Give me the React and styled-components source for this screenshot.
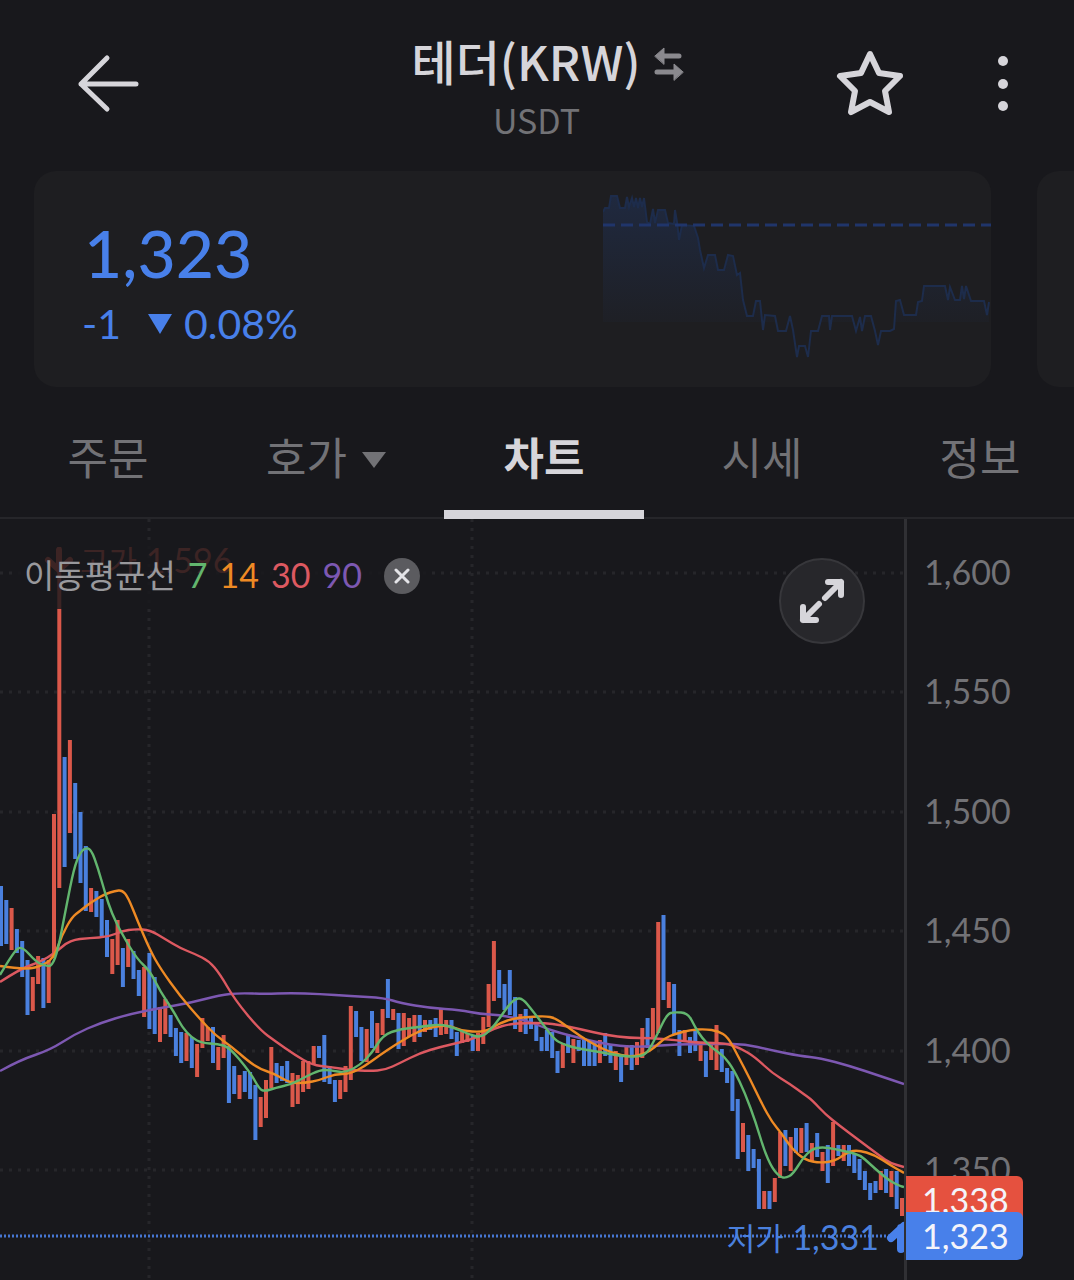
import React from 'react';
import styled, { createGlobalStyle } from 'styled-components';

const colors = {
  background: '#18181c',
  card: '#1e1e21',
  text: '#d6d5da',
  muted: '#727276',
  line: '#26262a',
  blue: '#4880ea',
  candleBlue: '#4a80de',
  candleRed: '#db584a',
  tagRed: '#e5513f',
};

const averages = [
  {
    days: 7,
    color: '#62b56e',
    points: [0, 975, 14, 951, 22, 946, 36, 962, 46, 966, 52, 966, 58, 950, 66, 908, 74, 868, 80, 853, 85, 848, 91, 849, 98, 868, 105, 893, 112, 914, 122, 934, 137, 959, 150, 971, 160, 991, 174, 1012, 182, 1027, 192, 1038, 202, 1043, 218, 1044, 229, 1047, 250, 1072, 260, 1090, 266, 1091, 275, 1088, 292, 1084, 305, 1077, 320, 1070, 330, 1070, 345, 1073, 360, 1065, 372, 1053, 383, 1035, 400, 1029, 420, 1027, 440, 1024, 455, 1028, 468, 1034, 482, 1038, 495, 1025, 508, 1006, 516, 998, 523, 999, 532, 1010, 545, 1027, 555, 1040, 563, 1044, 575, 1048, 600, 1052, 620, 1056, 640, 1057, 648, 1052, 656, 1037, 667, 1014, 674, 1012, 688, 1013, 695, 1027, 702, 1038, 712, 1048, 724, 1056, 734, 1070, 745, 1093, 756, 1123, 764, 1150, 772, 1168, 780, 1177, 786, 1178, 793, 1174, 803, 1158, 812, 1149, 822, 1147, 835, 1149, 848, 1152, 860, 1155, 870, 1164, 880, 1173, 890, 1181, 900, 1186, 904, 1187],
  },
  {
    days: 14,
    color: '#ee8a24',
    points: [0, 966, 25, 970, 45, 965, 55, 955, 62, 935, 72, 917, 80, 911, 90, 903, 105, 894, 115, 891, 122, 890, 128, 897, 138, 922, 150, 950, 160, 968, 180, 996, 200, 1019, 215, 1035, 232, 1047, 248, 1061, 260, 1069, 275, 1074, 290, 1083, 305, 1083, 320, 1080, 335, 1074, 350, 1074, 365, 1066, 380, 1055, 395, 1045, 410, 1036, 420, 1031, 432, 1027, 448, 1025, 460, 1030, 475, 1032, 487, 1031, 500, 1023, 515, 1018, 530, 1017, 545, 1016, 555, 1018, 565, 1025, 580, 1036, 595, 1045, 612, 1053, 630, 1057, 645, 1054, 655, 1047, 665, 1038, 675, 1034, 690, 1030, 705, 1029, 718, 1031, 728, 1037, 738, 1056, 750, 1079, 762, 1104, 772, 1122, 782, 1134, 792, 1149, 805, 1160, 820, 1163, 835, 1161, 848, 1152, 858, 1150, 875, 1155, 890, 1165, 904, 1173],
  },
  {
    days: 30,
    color: '#dd5961',
    points: [0, 982, 20, 969, 40, 962, 55, 953, 70, 940, 90, 938, 108, 937, 122, 931, 135, 929, 150, 930, 165, 939, 180, 948, 195, 954, 209, 961, 220, 974, 235, 1000, 260, 1030, 275, 1041, 295, 1055, 312, 1065, 330, 1067, 350, 1070, 370, 1071, 385, 1070, 400, 1063, 420, 1053, 440, 1047, 462, 1042, 478, 1037, 495, 1028, 510, 1024, 525, 1023, 545, 1023, 560, 1025, 580, 1029, 605, 1035, 630, 1038, 650, 1038, 675, 1040, 700, 1043, 725, 1043, 740, 1048, 755, 1057, 772, 1073, 790, 1084, 805, 1095, 812, 1100, 825, 1114, 840, 1126, 860, 1141, 880, 1156, 890, 1163, 904, 1167],
  },
  {
    days: 90,
    color: '#7d58b2',
    points: [0, 1071, 20, 1060, 50, 1050, 75, 1034, 100, 1023, 130, 1014, 160, 1008, 190, 1003, 220, 995, 240, 993, 265, 994, 290, 993, 320, 994, 350, 996, 385, 998, 400, 1003, 430, 1008, 460, 1010, 480, 1014, 500, 1015, 525, 1020, 545, 1028, 560, 1033, 580, 1038, 600, 1043, 620, 1046, 640, 1047, 665, 1045, 690, 1044, 720, 1044, 745, 1044, 770, 1050, 800, 1056, 820, 1058, 850, 1066, 880, 1076, 904, 1084],
  },
];

// one entry per candle: direction (b = down, r = up), top, bottom
const candles = `
b886-946 b900-944 r908-950 b929-953 b941-977 b960-1015 r977-1011 r956-984 b958-1008 r960-1003
r814-958 r547-888 b757-867 r740-833 b783-859 b812-883 b846-911 r888-912 b891-917 b899-936
b920-957 r939-974 r920-965 b948-987 r939-967 b951-979 b970-996 r967-1017 b953-1029 b977-1034
r1007-1042 r999-1034 b1015-1037 b1028-1056 b1032-1063 r1033-1061 b1037-1068 r1044-1077 r1018-1048 r1027-1041
b1027-1063 r1047-1070 r1035-1058 b1046-1103 b1066-1094 r1075-1099 b1071-1092 b1072-1099 b1085-1140 r1097-1127
r1080-1118 r1047-1088 b1063-1083 b1066-1081 b1061-1083 r1073-1107 r1075-1104 r1061-1092 r1061-1089 r1046-1064
b1046-1058 b1035-1082 b1066-1084 b1080-1102 r1080-1099 r1066-1092 r1006-1080 b1011-1037 b1027-1061 r1029-1062
b1011-1048 r1023-1053 r1009-1035 b979-1018 r1009-1020 b1013-1049 r1013-1046 r1018-1037 r1015-1042 b1015-1037
r1020-1032 b1020-1030 b1018-1037 r1008-1035 r1020-1034 b1020-1039 b1032-1056 r1030-1043 r1033-1042 b1036-1051
r1033-1051 r1017-1044 r984-1027 r941-1001 b970-998 b984-1010 b970-1015 b997-1029 r1014-1032 b1009-1034
b1017-1029 b1025-1041 b1037-1051 b1030-1051 b1032-1058 b1051-1073 r1043-1068 b1034-1053 r1039-1063 b1040-1051
b1039-1066 b1041-1066 b1041-1066 r1040-1063 b1033-1056 b1044-1063 r1051-1070 b1056-1082 r1045-1065 b1045-1070
r1042-1065 r1028-1058 b1018-1048 r1008-1039 r922-1033 b915-1000 r982-1008 b984-1034 b1030-1056 r1030-1041
b1037-1053 b1030-1051 r1043-1061 b1051-1077 r1042-1060 r1025-1070 b1049-1072 b1068-1083 b1071-1111 b1099-1159
r1123-1152 b1135-1171 b1149-1168 b1159-1209 r1191-1209 b1191-1209 r1178-1202 r1132-1178 b1130-1166 r1137-1171
b1128-1153 r1128-1153 b1123-1152 r1143-1162 b1133-1157 r1152-1171 b1145-1183 r1122-1166 b1145-1156 r1145-1161
b1145-1166 b1154-1173 b1159-1180 b1171-1190 b1183-1200 b1181-1193 r1171-1190 b1169-1193 r1171-1197 b1171-1209
r1198-1216`
  .trim()
  .split(/\s+/)
  .map((item, index) => {
    const [top, bottom] = item.slice(1).split('-').map(Number);
    return { up: item[0] === 'r', x: 1 + index * 5.3, top, bottom };
  });

const priceHistory =
  '603,212 605,208 609,208 611,196 617,196 620,208 625,208 627,197 629,207 632,198 634,207 636,198 638,208 640,198 642,207 644,198 647,222 650,224 653,209 655,223 658,210 665,210 668,223 674,224 675,210 677,222 679,240 682,225 694,226 698,238 700,250 704,268 708,255 715,255 718,270 724,270 728,255 733,256 737,275 740,273 743,300 747,316 753,316 756,301 760,301 763,330 765,315 775,316 778,331 786,331 790,316 793,330 797,357 799,346 805,346 808,357 811,331 818,331 822,316 829,316 830,330 832,316 852,316 856,331 860,317 862,331 865,316 871,316 875,331 878,345 881,331 890,331 894,329 896,301 900,300 904,315 916,315 918,302 922,301 924,286 945,286 948,300 950,287 955,300 960,300 962,286 964,299 966,286 971,301 984,301 987,315 989,302';

const gridRows = [573, 692, 812, 931, 1051, 1170];
const gridColumns = [149, 472];
const prices = ['1,600', '1,550', '1,500', '1,450', '1,400', '1,350'];

// rounds the corners of a flat x, y list with quadratic midpoints
const smoothPath = points => {
  let path = `M${points[0]} ${points[1]}`;
  for (let i = 2; i < points.length - 2; i += 2) {
    const midX = (points[i] + points[i + 2]) / 2;
    const midY = (points[i + 1] + points[i + 3]) / 2;
    path += `Q${points[i]} ${points[i + 1]} ${midX} ${midY}`;
  }
  return `${path}L${points[points.length - 2]} ${points[points.length - 1]}`;
};

const GlobalStyle = createGlobalStyle`
  * {
    box-sizing: border-box;
  }

  body {
    margin: 0;
    background: ${colors.background};
    color: ${colors.text};
    font-family: Lato, 'Noto Sans CJK KR', sans-serif;
  }

  button {
    padding: 0;
    border: 0;
    background: none;
    color: inherit;
    font: inherit;
  }

  svg {
    display: block;
  }
`;

const Screen = styled.div`
  min-height: 100vh;
  overflow: hidden;
`;

const Header = styled.header`
  display: grid;
  grid-template-columns: 1fr auto 1fr;
  align-items: center;
  height: 171px;
  padding: 0 51px 3px 72px;
`;

const Heading = styled.div`
  padding-top: 4px;
  margin-right: 22px;
  font-family: 'Noto Sans CJK KR', sans-serif;
  text-align: center;
`;

const TitleRow = styled.div`
  display: flex;
  align-items: center;
  gap: 13px;
  padding-left: 22px;

  svg {
    margin-top: 8px;
  }
`;

const Title = styled.h1`
  margin: 0;
  font-size: 48px;
  font-weight: 500;
  line-height: 60px;
`;

const Symbol = styled.p`
  margin: 8px 0 0;
  color: ${colors.muted};
  font-size: 34px;
  line-height: 44px;
`;

const Actions = styled.div`
  display: flex;
  justify-content: flex-end;
  align-items: center;
  gap: 77px;
`;

const Cards = styled.section`
  display: flex;
  gap: 46px;
  padding-left: 34px;
  overflow: hidden;
`;

const Card = styled.div`
  display: flex;
  flex: 0 0 calc(100% - 83px);
  justify-content: space-between;
  height: 216px;
  padding-left: 48px;
  border-radius: 22px;
  background: ${colors.card};
  color: ${colors.blue};
  overflow: hidden;
`;

const Quote = styled.div`
  padding-top: 44px;
`;

const Price = styled.div`
  padding-left: 2px;
  font-size: 66px;
  font-weight: 500;
  line-height: 76px;
`;

const Change = styled.div`
  display: flex;
  align-items: center;
  font-size: 41px;
  line-height: 66px;

  svg {
    margin: 0 11px 0 26px;
  }
`;

const Tabs = styled.nav`
  display: flex;
  gap: 18px;
  margin-top: 14px;
  padding-left: 8px;
  box-shadow: inset 0 -2px ${colors.line};
  overflow: hidden;
`;

const Tab = styled.button`
  display: flex;
  flex: 0 0 200px;
  justify-content: center;
  align-items: center;
  gap: 15px;
  height: 118px;
  border-bottom: 9px solid ${props => (props.$active ? colors.text : 'transparent')};
  color: ${props => (props.$active ? colors.text : colors.muted)};
  font-family: 'Noto Sans CJK KR', sans-serif;
  font-size: 44px;
  font-weight: ${props => (props.$active ? 700 : 400)};

  svg {
    margin-top: 8px;
  }
`;

const Chart = styled.main`
  display: flex;
`;

const Plot = styled.div`
  position: relative;
  flex: 1;
  min-width: 0;

  > svg {
    width: 100%;
    height: auto;
  }
`;

const Legend = styled.div`
  position: absolute;
  top: 24px;
  left: 12px;
  display: flex;
  align-items: center;
  gap: 12px;
  height: 66px;
  padding: 0 12px;
  background: rgba(24, 24, 28, 0.82);
  font-size: 34px;

  span {
    margin-bottom: 4px;
  }
`;

const LegendName = styled.span`
  color: #99999d;
  font-size: 33px;
`;

const Period = styled.span`
  color: ${props => props.$color};
`;

const CloseButton = styled.button`
  display: grid;
  place-items: center;
  width: 36px;
  height: 36px;
  margin-left: 10px;
  border-radius: 50%;
  background: #5b5b5f;
`;

const ExpandButton = styled.button`
  position: absolute;
  top: 39px;
  right: 39px;
  display: grid;
  place-items: center;
  width: 86px;
  height: 86px;
  border: 2px solid #37373b;
  border-radius: 50%;
  background: #27272b;
`;

const Axis = styled.aside`
  position: relative;
  width: 170px;
  border-left: 3px solid #303034;
`;

const AxisLabels = styled.div`
  display: flex;
  flex-direction: column;
  justify-content: space-between;
  height: 670px;
  padding: 33px 0 0 17px;
  color: ${colors.muted};
  font-size: 34px;
  line-height: 40px;
`;

const PriceTag = styled.div`
  position: absolute;
  top: ${props => props.$top}px;
  left: -1px;
  width: 117px;
  padding-left: 16px;
  border-radius: 0 6px 6px 0;
  background: ${props => props.$color};
  color: #f4f4fa;
  font-size: 34px;
  line-height: 48px;
`;

const BackIcon = () => (
  <svg width="72" height="64" fill="none" stroke="currentColor" strokeWidth="5" strokeLinecap="round" strokeLinejoin="round">
    <path d="M35 6 9 32l26 25M9 32h55" />
  </svg>
);

const SwapIcon = () => (
  <svg width="30" height="36" fill="#8a898e" stroke="#8a898e" strokeWidth="5" strokeLinecap="round">
    <path d="M8 10h17M3 26h17" />
    <path d="M1 10l9-8v16zM29 26l-9-8v16z" strokeWidth="1" strokeLinejoin="round" />
  </svg>
);

const StarIcon = () => (
  <svg width="72" height="72" fill="none" stroke="currentColor" strokeWidth="6" strokeLinejoin="round">
    <path d="m36 6 9 19 21 3-15 15 4 21-19-10-19 10 4-21L6 28l21-3z" />
  </svg>
);

const MoreIcon = () => (
  <svg width="40" height="64" fill="currentColor">
    <circle cx="20" cy="9" r="5" />
    <circle cx="20" cy="32" r="5" />
    <circle cx="20" cy="54" r="5" />
  </svg>
);

const Sparkline = () => (
  <svg width="388" height="216" viewBox="603 171 388 216">
    <defs>
      <linearGradient id="spark" x1="0" y1="196" x2="0" y2="322" gradientUnits="userSpaceOnUse">
        <stop offset="0" stopColor="#2455b8" stopOpacity="0.2" />
        <stop offset="1" stopColor="#2455b8" stopOpacity="0.03" />
      </linearGradient>
      <clipPath id="sparkArea">
        <path d="M603 171h388v151H603z" />
      </clipPath>
    </defs>
    <path d={`M603 387 L${priceHistory} L989 387Z`} fill="url(#spark)" clipPath="url(#sparkArea)" />
    <polyline points={priceHistory} fill="none" stroke="#1d2c4b" strokeWidth="2" />
    <path d="M603 225h388" stroke="#20356a" strokeWidth="3" strokeDasharray="12 6" />
  </svg>
);

const PricePlot = () => (
  <svg viewBox="0 519 904 761">
    <g stroke="#26262a" strokeWidth="3" strokeDasharray="3 6">
      {gridRows.map(y => (
        <path key={y} d={`M0 ${y}H904`} />
      ))}
      {gridColumns.map(x => (
        <path key={x} d={`M${x} 519V1280`} />
      ))}
    </g>
    {candles.map(({ up, x, top, bottom }) => (
      <rect
        key={x}
        x={x - 2}
        y={top}
        width="4"
        height={bottom - top}
        fill={up ? colors.candleRed : colors.candleBlue}
      />
    ))}
    {[...averages].reverse().map(({ days, color, points }) => (
      <path key={days} d={smoothPath(points)} fill="none" stroke={color} strokeWidth="2.4" />
    ))}
    <path d="M0 1236H904" stroke="#4676d2" strokeWidth="3" strokeDasharray="2 2" />
    <g fill="none" strokeLinecap="round" strokeWidth="6">
      <path d="M48 560l11 10 11-10M59 550v18" stroke={colors.candleRed} />
      <path d="M891 1238l13-12M901 1228v21" stroke={colors.blue} strokeWidth="8" />
    </g>
    <g fontSize="34">
      <text x="80" y="573" fill={colors.candleRed}>
        <tspan fontSize="31">고가</tspan> 1,596
      </text>
      <text x="879" y="1250" textAnchor="end" fill={colors.candleBlue}>
        <tspan fontSize="31">저가</tspan> 1,331
      </text>
    </g>
  </svg>
);

const App = () => (
  <Screen>
    <GlobalStyle />
    <Header>
      <button type="button" aria-label="뒤로">
        <BackIcon />
      </button>
      <Heading>
        <TitleRow>
          <Title>테더(KRW)</Title>
          <SwapIcon />
        </TitleRow>
        <Symbol>USDT</Symbol>
      </Heading>
      <Actions>
        <button type="button" aria-label="관심">
          <StarIcon />
        </button>
        <button type="button" aria-label="더보기">
          <MoreIcon />
        </button>
      </Actions>
    </Header>

    <Cards>
      <Card>
        <Quote>
          <Price>1,323</Price>
          <Change>
            -1
            <svg width="26" height="22" fill="currentColor">
              <path d="M1 1h24L13 21z" />
            </svg>
            0.08%
          </Change>
        </Quote>
        <Sparkline />
      </Card>
      <Card />
    </Cards>

    <Tabs>
      <Tab type="button">주문</Tab>
      <Tab type="button">
        호가
        <svg width="24" height="16" fill="currentColor">
          <path d="M0 0h24L12 16z" />
        </svg>
      </Tab>
      <Tab type="button" $active>차트</Tab>
      <Tab type="button">시세</Tab>
      <Tab type="button">정보</Tab>
    </Tabs>

    <Chart>
      <Plot>
        <PricePlot />
        <Legend>
          <LegendName>이동평균선</LegendName>
          {averages.map(({ days, color }) => (
            <Period key={days} $color={color}>{days}</Period>
          ))}
          <CloseButton type="button" aria-label="닫기">
            <svg width="16" height="16" stroke="#e4e4e8" strokeWidth="3" strokeLinecap="round">
              <path d="M2 2l12 12M14 2 2 14" />
            </svg>
          </CloseButton>
        </Legend>
        <ExpandButton type="button" aria-label="전체 화면">
          <svg width="48" height="48" fill="none" stroke="currentColor" strokeWidth="6" strokeLinecap="round" strokeLinejoin="round">
            <path d="M30 5h13v13M43 5 27 21M5 30v13h13M5 43l16-16" />
          </svg>
        </ExpandButton>
      </Plot>
      <Axis>
        <AxisLabels>
          {prices.map(price => (
            <span key={price}>{price}</span>
          ))}
        </AxisLabels>
        <PriceTag $top={657} $color={colors.tagRed}>1,338</PriceTag>
        <PriceTag $top={693} $color={colors.blue}>1,323</PriceTag>
      </Axis>
    </Chart>
  </Screen>
);

export default App;
